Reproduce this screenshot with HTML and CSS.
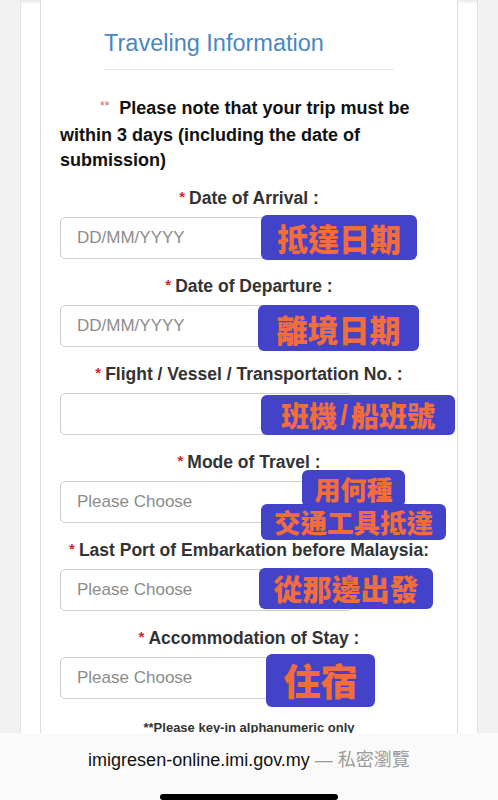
FILE: index.html
```html
<!DOCTYPE html>
<html lang="en">
<head>
<meta charset="utf-8">
<title>Traveling Information</title>
<link rel="stylesheet" href="styles.css">
</head>
<body>
<div class="page">
  <div class="card">
    <h2 class="title">Traveling Information</h2>
    <p class="note"><span class="stars">**</span>&nbsp; Please note that your trip must be within 3 days (including the date of submission)</p>

    <div class="field">
      <div class="label"><span class="req">*</span>Date of Arrival :</div>
      <div class="control"><span class="ph">DD/MM/YYYY</span></div>
    </div>
    <div class="field">
      <div class="label"><span class="req">*</span>Date of Departure :</div>
      <div class="control"><span class="ph">DD/MM/YYYY</span></div>
    </div>
    <div class="field">
      <div class="label"><span class="req">*</span>Flight / Vessel / Transportation No. :</div>
      <div class="control"></div>
    </div>
    <div class="field">
      <div class="label"><span class="req">*</span>Mode of Travel :</div>
      <div class="control"><span class="ph">Please Choose</span></div>
    </div>
    <div class="field">
      <div class="label"><span class="req">*</span>Last Port of Embarkation before Malaysia:</div>
      <div class="control"><span class="ph">Please Choose</span></div>
    </div>
    <div class="field">
      <div class="label"><span class="req">*</span>Accommodation of Stay :</div>
      <div class="control"><span class="ph">Please Choose</span></div>
    </div>

    <p class="hint">**Please key-in alphanumeric only</p>
  </div>
</div>

<div class="sticker s1">抵達日期</div>
<div class="sticker s2">離境日期</div>
<div class="sticker s3">班機<span class="slash">/</span>船班號</div>
<div class="sticker s4a">用何種</div>
<div class="sticker s4b">交通工具抵達</div>
<div class="sticker s5">從那邊出發</div>
<div class="sticker s6">住宿</div>

<div class="browserbar">
  <div class="url">imigresen-online.imi.gov.my <span class="mode">— 私密瀏覽</span></div>
  <div class="homebar"></div>
</div>
</body>
</html>
```

FILE: styles.css
```css
html, body {
  margin: 0;
  padding: 0;
}

body {
  background: #f1f1f1;
  font-family: "Liberation Sans", Arial, "Noto Sans CJK TC", sans-serif;
  color: #333;
  min-height: 800px;
  overflow: hidden;
}

.page {
  margin: 0 20px;
  padding: 0 19px;
  background: linear-gradient(#e9e9e9, #ffffff 4px);
  border-left: 1px solid #e2e2e2;
  border-right: 1px solid #e2e2e2;
  min-height: 800px;
}

.card {
  background: #fff;
  border-left: 1px solid #dcdcdc;
  border-right: 1px solid #dcdcdc;
  padding: 30px 19px 80px;
  min-height: 700px;
}

.title {
  margin: 0 0 0 44px;
  width: 290px;
  font-size: 23.5px;
  line-height: 27px;
  font-weight: normal;
  color: #4a87bf;
  padding-bottom: 12px;
  border-bottom: 1px solid #e6e6e6;
}

.note {
  margin: 26px 0 0;
  text-indent: 40px;
  font-size: 18px;
  line-height: 25px;
  font-weight: bold;
  color: #111;
}

.stars {
  color: #e05a5a;
  font-size: 12px;
  font-weight: normal;
  position: relative;
  top: -4px;
}

.field {
  margin-top: 17px;
}

.field:first-of-type {
  margin-top: 15px;
}

.label {
  text-align: center;
  font-size: 17.5px;
  line-height: 20px;
  height: 20px;
  font-weight: bold;
  color: #333;
  margin-bottom: 9px;
  white-space: nowrap;
}

.req {
  color: #d9232d;
  font-size: 15px;
  position: relative;
  top: -2px;
  margin-right: 4px;
}

.control {
  box-sizing: border-box;
  width: 293px;
  height: 42px;
  border: 1px solid #cfcfcf;
  border-radius: 5px;
  background: #fff;
  display: flex;
  align-items: center;
  padding-left: 16px;
}

.ph {
  font-size: 17px;
  color: #8c8c8c;
}

.hint {
  margin: 21px 0 0;
  text-align: center;
  font-size: 13px;
  line-height: 16px;
  font-weight: bold;
  color: #333;
}

.sticker {
  position: absolute;
  box-sizing: border-box;
  display: flex;
  align-items: center;
  justify-content: center;
  background: #4343c9;
  color: #f26c3c;
  border-radius: 6px;
  font-family: "Noto Sans CJK TC", "Noto Sans CJK SC", sans-serif;
  font-weight: 900;
  line-height: 1;
  white-space: nowrap;
}

.s1 { left: 261px; top: 215px; width: 156px; height: 45px; font-size: 31px; }
.s2 { left: 258px; top: 305px; width: 161px; height: 46px; font-size: 31px; }
.s3 { left: 261px; top: 395px; width: 194px; height: 40px; font-size: 28px; }
.s4a { left: 302px; top: 470px; width: 103px; height: 37px; font-size: 26px; }
.s4b { left: 261px; top: 504px; width: 185px; height: 36px; font-size: 26.5px; }
.s5 { left: 259px; top: 568px; width: 174px; height: 41px; font-size: 29px; }
.s6 { left: 266px; top: 654px; width: 109px; height: 53px; font-size: 37px; }

.slash {
  margin: 0 3px;
  font-family: "Liberation Sans", sans-serif;
  font-weight: bold;
}

.browserbar {
  position: fixed;
  left: 0;
  right: 0;
  bottom: 0;
  height: 67px;
  background: #fafafa;
  display: flex;
  flex-direction: column;
  align-items: center;
}

.url {
  margin-top: 16px;
  font-size: 18px;
  line-height: 22px;
  color: #111;
  font-family: "Liberation Sans", "Noto Sans CJK TC", sans-serif;
}

.mode {
  color: #9a9a9a;
}

.homebar {
  margin-top: 23px;
  width: 178px;
  height: 6px;
  border-radius: 3px;
  background: #000;
}
```
